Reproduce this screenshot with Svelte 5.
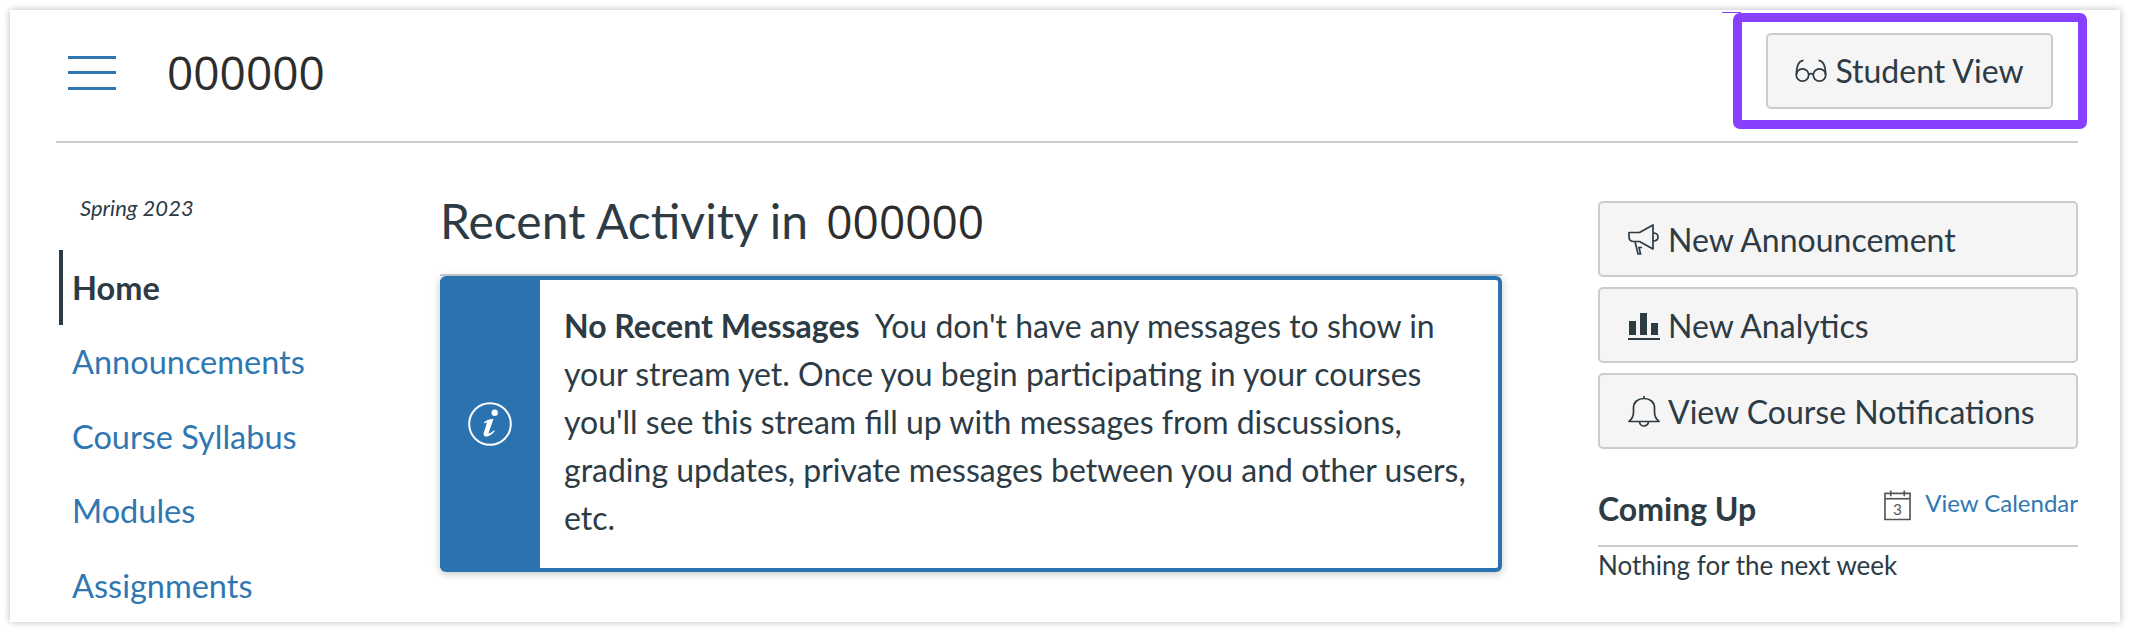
<script>
	const links = ['Announcements', 'Course Syllabus', 'Modules', 'Assignments'];
</script>

<div class="page">
	<div class="card">
		<header class="top">
			<button class="burger" aria-label="Menu"><span></span><span></span><span></span></button>
			<h1 class="course">000000</h1>
			<button class="btn student">
				<svg class="ico glasses" viewBox="0 0 32 24" fill="none" stroke="currentColor" stroke-width="1.7">
					<circle cx="7.5" cy="16" r="6.2" />
					<circle cx="24.5" cy="16" r="6.2" />
					<path d="M13.6 15.5q2.4-1.6 4.8 0" />
					<path d="M1.4 16C1.4 9 2.5 2 8.5 1.4" />
					<path d="M30.6 16C30.6 9 29.5 2 23.5 1.4" />
				</svg>
				Student View
			</button>
		</header>

		<div class="body">
			<nav class="side">
				<div class="term">Spring 2023</div>
				<a class="item active" href="#home">Home</a>
				{#each links as link}
					<a class="item" href="#{link}">{link}</a>
				{/each}
			</nav>

			<main class="main">
				<h2 class="recent">Recent Activity in <span class="num">000000</span></h2>
				<div class="alert">
					<div class="alert-side">
						<svg viewBox="0 0 44 44" width="44" height="44" fill="none">
							<circle cx="22" cy="22" r="20.8" stroke="#fff" stroke-width="2" />
							<circle cx="26.700" cy="10.700" r="3.200" fill="#fff" />
							<path d="M16 20.500c2.500-2.500 5.500-3.700 9.500-3.500l-4.800 13.500c-.4 1.500.8 1.700 5.300-2.200l.8 1c-4 4.300-7 5.700-9.500 5.200-1.800-.4-2-2-1.500-3.700l3.300-10.600c-.8.300-1.600.8-2.300 1.400z" fill="#fff" />
						</svg>
					</div>
					<p class="alert-text"><b>No Recent Messages</b>&nbsp; You don't have any messages to show in your stream yet. Once you begin participating in your courses you'll see this stream fill up with messages from discussions, grading updates, private messages between you and other users, etc.</p>
				</div>
			</main>

			<aside class="right">
				<div class="actions">
					<button class="btn wide">
						<svg class="ico" viewBox="0 0 32 32" fill="none" stroke="currentColor" stroke-width="1.7">
							<path d="M1 9.500h10.500L25 2v24l-13.500-7.500H6q-5 0-5-4.500z" stroke-linejoin="round" />
							<path d="M25 10q5 0 5 4t-5 4" />
							<path d="M7 18.500 10 31h2.500l-1.500-6.500h3" />
						</svg>
						New Announcement
					</button>
					<button class="btn wide">
						<svg class="ico" viewBox="0 0 32 32" fill="currentColor">
							<rect x="1" y="12" width="7" height="14" />
							<rect x="12" y="4" width="7" height="22" />
							<rect x="23" y="14" width="7" height="12" />
							<rect x="0" y="29" width="32" height="2" />
						</svg>
						New Analytics
					</button>
					<button class="btn wide">
						<svg class="ico" viewBox="0 0 32 32" fill="none" stroke="currentColor" stroke-width="1.7">
							<path d="M1 26.500h30c-3-2.500-4.500-5-4.500-9.500V13C26.500 7 22 3.500 16 3.500S5.500 7 5.500 13v4c0 4.500-1.500 7-4.500 9.500z" stroke-linejoin="round" />
							<path d="M16 3.500V1" />
							<path d="M11.500 26.500a4.500 4.500 0 0 0 9 0" />
						</svg>
						View Course Notifications
					</button>
				</div>

				<div class="coming">
					<h3>Coming Up</h3>
					<a class="cal" href="#cal">
						<svg viewBox="0 0 28 32" width="27" height="32" fill="none" stroke="#555" stroke-width="1.7">
							<path d="M1 4h26v27H1z" />
							<path d="M1 9.500h26" />
							<path d="M7 1v6M21 1v6" />
							<text x="14" y="26" text-anchor="middle" font-size="16" font-family="Lato" fill="#555" stroke="none">3</text>
						</svg>
						View Calendar
					</a>
				</div>
				<p class="nothing">Nothing for the next week</p>
			</aside>
		</div>

		<div class="highlight"></div>
		<div class="sliver"></div>
	</div>
</div>

<style>
	:global(body) {
		margin: 0;
		background: #fff;
		font-family: Lato, "Liberation Sans", sans-serif;
		color: #2d3b45;
	}

	.page {
		padding: 10px;
		height: 612px;
	}

	.card {
		position: relative;
		height: 612px;
		width: 2110px;
		background: #fff;
		box-shadow: 0 0 7px rgba(0, 0, 0, 0.28);
		overflow: hidden;
	}

	.top {
		display: flex;
		align-items: center;
		height: 133px;
		margin: 0 42px 0 46px;
		padding: 0 25px 0 12px;
		border-bottom: 2px solid #c7cdd1;
		box-sizing: border-box;
	}

	.burger {
		display: flex;
		flex-direction: column;
		gap: 12.5px;
		width: 48px;
		padding: 0;
		margin-top: -6px;
		background: none;
		border: 0;
	}

	.burger span {
		height: 3px;
		background: #3077b2;
	}

	.course {
		margin: 0 0 8px 51px;
		font-family: "Open Sans", sans-serif;
		font-weight: 400;
		font-size: 46px;
		color: #2d2d2d;
	}

	.btn {
		display: flex;
		align-items: center;
		gap: 8px;
		box-sizing: border-box;
		height: 76px;
		background: #f5f5f5;
		border: 2px solid #c7cdd1;
		border-radius: 5px;
		font: 400 32px Lato, sans-serif;
		color: #2d3b45;
	}

	.student {
		margin-left: auto;
		width: 287px;
		justify-content: center;
		margin-top: -10px;
	}

	.ico {
		width: 32px;
		height: 32px;
		flex: none;
	}

	.glasses {
		height: 24px;
	}

	.body {
		display: flex;
		padding: 0 42px 0 46px;
	}

	.side {
		width: 384px;
		flex: none;
		padding-top: 53px;
		display: flex;
		flex-direction: column;
	}

	.term {
		margin-left: 24px;
		font-size: 22px;
		font-style: italic;
		line-height: 24px;
		margin-bottom: 30px;
	}

	.item {
		display: flex;
		align-items: center;
		flex: none;
		height: 74.500px;
		box-sizing: border-box;
		padding-left: 16px;
		font-size: 32.5px;
		color: #3077b2;
		text-decoration: none;
	}

	.item.active {
		margin-left: 3px;
		padding-left: 9px;
		border-left: 4px solid #2d3b45;
		color: #2d3b45;
		font-weight: 700;
	}

	.main {
		width: 1062px;
		flex: none;
		padding-top: 49px;
	}

	.recent {
		margin: 0;
		padding-bottom: 24px;
		border-bottom: 2px solid #c7cdd1;
		font-size: 48px;
		font-weight: 400;
		line-height: 58px;
	}

	.num {
		font-family: "Open Sans", sans-serif;
		font-size: 46px;
		color: #2d2d2d;
		margin-left: 6px;
	}

	.alert {
		display: flex;
		box-sizing: border-box;
		height: 296px;
		border: 4px solid #2a72b0;
		border-left: 0;
		border-radius: 6px;
		box-shadow: 0 2px 8px rgba(0, 0, 0, 0.22);
	}

	.alert-side {
		width: 100px;
		flex: none;
		display: flex;
		align-items: center;
		justify-content: center;
		background: #2a72b0;
	}

	.alert-text {
		margin: 0;
		padding: 22px 28px 0 24px;
		font-size: 32px;
		line-height: 48px;
	}

	.right {
		margin-left: 96px;
		width: 480px;
		flex: none;
		padding-top: 58px;
	}

	.actions {
		display: flex;
		flex-direction: column;
		gap: 10px;
	}

	.wide {
		width: 100%;
		padding: 0 0 0 28px;
	}

	.coming {
		display: flex;
		justify-content: space-between;
		margin-top: 38px;
		padding-bottom: 16px;
		border-bottom: 2px solid #c7cdd1;
	}

	.coming h3 {
		margin: 2px 0 0;
		font-size: 32px;
		line-height: 40px;
		font-weight: 700;
	}

	.cal {
		display: flex;
		gap: 14px;
		font-size: 24px;
		line-height: 32px;
		color: #3077b2;
		text-decoration: none;
	}

	.cal svg {
		margin-top: 2px;
	}

	.nothing {
		margin: 2px 0 0;
		font-size: 26px;
		line-height: 32px;
	}

	.highlight {
		position: absolute;
		left: 1723px;
		top: 3px;
		width: 354px;
		height: 116px;
		box-sizing: border-box;
		border: 9px solid #883ffe;
		border-radius: 7px;
	}

	.sliver {
		position: absolute;
		left: 1712px;
		top: 2px;
		width: 19px;
		height: 1px;
		background: #883ffe;
	}
</style>
